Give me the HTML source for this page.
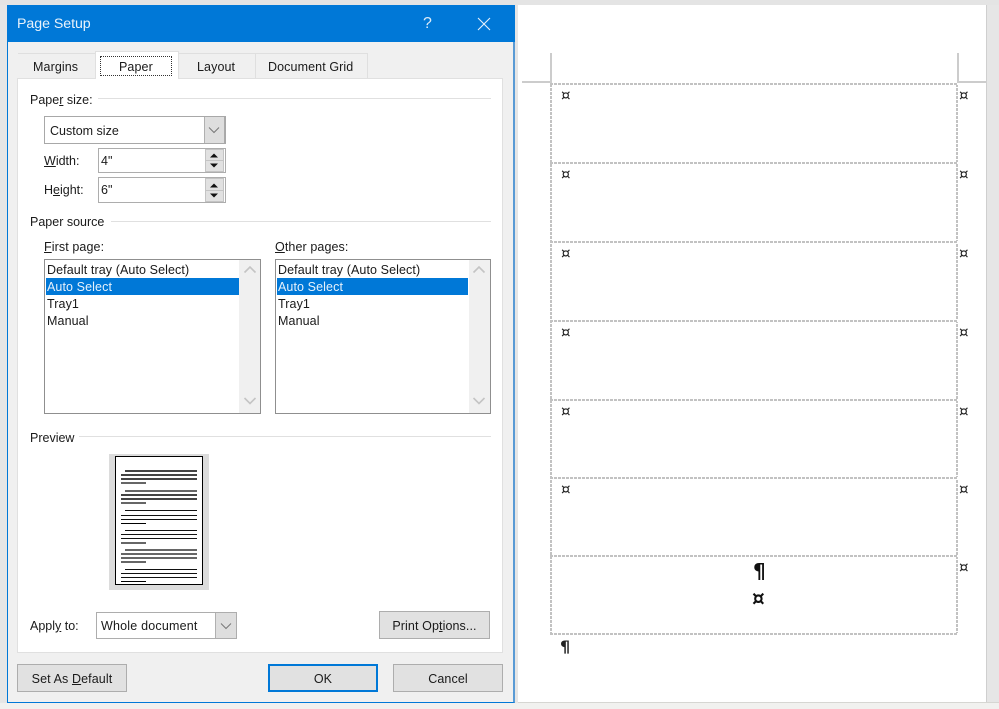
<!DOCTYPE html>
<html><head><meta charset="utf-8"><title>Page Setup</title>
<style>
html,body{margin:0;padding:0;background:#fff}
#r{position:relative;width:999px;height:709px;overflow:hidden;background:#e6e6e6;font-family:"Liberation Sans",sans-serif;font-size:12.5px;letter-spacing:.1px;color:#1a1a1a}
#r div,#r span.t,#r svg{position:absolute}
.t{white-space:nowrap;line-height:16px}
u{text-underline-offset:1px}
.btn{background:#e1e1e1;border:1px solid #adadad;box-sizing:border-box;text-align:center;line-height:28px}
.in{background:#fff;border:1px solid #adadad;box-sizing:border-box}
.hr{height:1px;background:#e0e0e0}
.cell{height:2px;left:550px;width:408px;background:repeating-linear-gradient(90deg,#c2c2c2 0 3px,#fff 3px 4px)}
.v{width:2px;top:84px;height:551px;background:repeating-linear-gradient(180deg,#c2c2c2 0 3px,#fff 3px 4px)}
.cur{font-size:15px;line-height:16px;letter-spacing:0;color:#222;font-family:"DejaVu Sans",sans-serif}
.sp{left:205px;width:19px;background:#e1e1e1;border:1px solid #c4c4c4;box-sizing:border-box}
</style></head><body><div id="r">
<div style="left:0;top:0;width:999px;height:5px;background:#e4e4e4"></div>
<div style="left:518px;top:5px;width:468px;height:698px;background:#fff"></div>
<div style="left:986px;top:5px;width:1px;height:698px;background:#cfcfcf"></div>
<div style="left:0;top:703px;width:999px;height:6px;background:#f1f1ef"></div>
<div style="left:518px;top:702px;width:481px;height:1px;background:#d6d6d2"></div>

<div style="left:522px;top:81px;width:29px;height:2px;background:#cccccc"></div>
<div style="left:550px;top:53px;width:2px;height:30px;background:#cccccc"></div>
<div style="left:957px;top:53px;width:2px;height:30px;background:#cccccc"></div>
<div style="left:958px;top:81px;width:28px;height:2px;background:#cccccc"></div>
<div class="v" style="left:550px"></div>
<div class="v" style="left:956px"></div>
<div class="cell" style="top:83px"></div>
<div class="cell" style="top:162px"></div>
<div class="cell" style="top:241px"></div>
<div class="cell" style="top:320px"></div>
<div class="cell" style="top:399px"></div>
<div class="cell" style="top:477px"></div>
<div class="cell" style="top:555px"></div>
<div class="cell" style="top:633px"></div>
<span class="t cur" style="left:561px;top:87px">¤</span><span class="t cur" style="left:959px;top:87px">¤</span>
<span class="t cur" style="left:561px;top:166px">¤</span><span class="t cur" style="left:959px;top:166px">¤</span>
<span class="t cur" style="left:561px;top:245px">¤</span><span class="t cur" style="left:959px;top:245px">¤</span>
<span class="t cur" style="left:561px;top:324px">¤</span><span class="t cur" style="left:959px;top:324px">¤</span>
<span class="t cur" style="left:561px;top:403px">¤</span><span class="t cur" style="left:959px;top:403px">¤</span>
<span class="t cur" style="left:561px;top:481px">¤</span><span class="t cur" style="left:959px;top:481px">¤</span>
<span class="t cur" style="left:959px;top:559px">¤</span>
<span class="t" style="left:753px;top:560px;font-size:20px;line-height:22px;font-weight:bold;color:#111;font-family:'DejaVu Sans',sans-serif">¶</span>
<span class="t" style="left:752px;top:588px;font-size:20px;line-height:20px;font-weight:bold;color:#111;font-family:'DejaVu Sans',sans-serif">¤</span>
<span class="t" style="left:560px;top:638px;font-size:16px;line-height:18px;font-weight:bold;color:#222;font-family:'DejaVu Sans',sans-serif">¶</span>

<div style="left:7px;top:5px;width:508px;height:698px;background:#f0f0f0;box-sizing:border-box;border:1px solid #0078d7;border-top:0;border-right:2px solid #5a9bd5"></div>
<div style="left:7px;top:5px;width:508px;height:37px;background:#0078d7"></div>
<span class="t" style="left:17px;top:16px;font-size:14.2px;letter-spacing:-.05px;color:#e8f2fb">Page Setup</span>
<span class="t" style="left:423px;top:16px;font-size:16px;color:#dcebf8">?</span>
<svg style="left:477px;top:17px" width="14" height="14" viewBox="0 0 14 14"><path d="M1 1L13 13M13 1L1 13" stroke="#e6f1fb" stroke-width="1.1" fill="none"/></svg>

<div style="left:18px;top:53px;width:350px;height:25px;border-top:1px solid #dfdfdf;border-right:1px solid #dfdfdf;box-sizing:border-box"></div>
<div style="left:95px;top:53px;width:1px;height:25px;background:#dfdfdf"></div>
<div style="left:178px;top:53px;width:1px;height:25px;background:#dfdfdf"></div>
<div style="left:255px;top:53px;width:1px;height:25px;background:#dfdfdf"></div>
<div style="left:17px;top:78px;width:486px;height:575px;background:#fff;border:1px solid #e0e0e0;box-sizing:border-box"></div>
<div style="left:95px;top:51px;width:84px;height:28px;background:#fff;border:1px solid #e0e0e0;border-bottom:0;box-sizing:border-box"></div>
<div style="left:100px;top:56px;width:72px;height:20px;border:1px dotted #333;box-sizing:border-box"></div>
<span class="t" style="left:33px;top:59px">Margins</span>
<span class="t" style="left:119px;top:59px">Paper</span>
<span class="t" style="left:197px;top:59px">Layout</span>
<span class="t" style="left:268px;top:59px">Document Grid</span>

<span class="t" style="left:30px;top:92px;letter-spacing:0">Pape<u>r</u> size:</span>
<div class="hr" style="left:98px;top:98px;width:393px"></div>
<div class="in" style="left:44px;top:116px;width:182px;height:28px;border-color:#a8a8a8"></div>
<span class="t" style="left:50px;top:123px;letter-spacing:0">Custom size</span>
<div style="left:204px;top:117px;width:21px;height:26px;background:#dedede;border-left:1px solid #b0b0b0;box-sizing:border-box;border-right:1px solid #aaa"></div>
<svg style="left:208px;top:126px" width="12" height="8"><path d="M1 1.5L6 6.5L11 1.5" stroke="#777" fill="none"/></svg>

<span class="t" style="left:44px;top:153px;letter-spacing:0"><u>W</u>idth:</span>
<div class="in" style="left:98px;top:148px;width:128px;height:25px"></div>
<span class="t" style="left:101px;top:153px">4"</span>
<div class="sp" style="top:149px;height:12px"></div>
<div class="sp" style="top:160px;height:12px"></div>
<svg style="left:205px;top:150px" width="18" height="22"><path d="M5 7.5H13L9 3.5ZM5 13.5H13L9 17.5Z" fill="#111"/></svg>

<span class="t" style="left:44px;top:182px;letter-spacing:0">H<u>e</u>ight:</span>
<div class="in" style="left:98px;top:177px;width:128px;height:26px"></div>
<span class="t" style="left:101px;top:182px">6"</span>
<div class="sp" style="top:178px;height:13px"></div>
<div class="sp" style="top:190px;height:12px"></div>
<svg style="left:205px;top:180px" width="18" height="22"><path d="M5 7.5H13L9 3.5ZM5 13.5H13L9 17.5Z" fill="#111"/></svg>

<span class="t" style="left:30px;top:214px;letter-spacing:0">Paper source</span>
<div class="hr" style="left:111px;top:221px;width:380px"></div>

<span class="t" style="left:44px;top:239px"><u>F</u>irst page:</span>
<div class="in" style="left:44px;top:259px;width:217px;height:155px;border-color:#8f8f8f"></div>
<div style="left:239px;top:260px;width:21px;height:153px;background:#f0f0f0"></div>
<div style="left:46px;top:278px;width:193px;height:17px;background:#0078d7"></div>
<span class="t" style="left:47px;top:262px">Default tray (Auto Select)</span>
<span class="t" style="left:47px;top:279px;color:#e6f1fb">Auto Select</span>
<span class="t" style="left:47px;top:296px">Tray1</span>
<span class="t" style="left:47px;top:313px">Manual</span>
<svg style="left:243px;top:265px" width="14" height="10"><path d="M1.5 7.5L7 2L12.5 7.5" stroke="#c4c4c4" stroke-width="1.6" fill="none"/></svg>
<svg style="left:243px;top:396px" width="14" height="10"><path d="M1.5 2L7 7.5L12.5 2" stroke="#c4c4c4" stroke-width="1.6" fill="none"/></svg>

<span class="t" style="left:275px;top:239px"><u>O</u>ther pages:</span>
<div class="in" style="left:275px;top:259px;width:216px;height:155px;border-color:#8f8f8f"></div>
<div style="left:469px;top:260px;width:21px;height:153px;background:#f0f0f0"></div>
<div style="left:277px;top:278px;width:191px;height:17px;background:#0078d7"></div>
<span class="t" style="left:278px;top:262px">Default tray (Auto Select)</span>
<span class="t" style="left:278px;top:279px;color:#e6f1fb">Auto Select</span>
<span class="t" style="left:278px;top:296px">Tray1</span>
<span class="t" style="left:278px;top:313px">Manual</span>
<svg style="left:472px;top:265px" width="14" height="10"><path d="M1.5 7.5L7 2L12.5 7.5" stroke="#c4c4c4" stroke-width="1.6" fill="none"/></svg>
<svg style="left:472px;top:396px" width="14" height="10"><path d="M1.5 2L7 7.5L12.5 2" stroke="#c4c4c4" stroke-width="1.6" fill="none"/></svg>

<span class="t" style="left:30px;top:430px;letter-spacing:0">Preview</span>
<div class="hr" style="left:79px;top:436px;width:412px"></div>

<div style="left:109px;top:454px;width:100px;height:136px;background:#dcdcdc"></div>
<div style="left:115px;top:456px;width:88px;height:129px;background:#fff;border:1px solid #000;box-sizing:border-box"></div>
<svg style="left:115px;top:456px" width="88" height="129" shape-rendering="crispEdges">
<g fill="#444">
<rect x="10" y="14" width="72" height="2"/><rect x="6" y="18" width="76" height="2"/><rect x="6" y="22" width="76" height="2"/><rect x="6" y="26" width="25" height="2" fill="#666"/>
<rect x="10" y="34" width="72" height="2" fill="#666"/><rect x="6" y="38" width="76" height="2"/><rect x="6" y="42" width="76" height="2"/><rect x="6" y="46" width="25" height="2" fill="#666"/>
<rect x="10" y="54" width="72" height="1" fill="#111"/><rect x="6" y="59" width="76" height="1" fill="#111"/><rect x="6" y="63" width="76" height="1" fill="#111"/><rect x="6" y="67" width="25" height="1" fill="#000"/>
<rect x="10" y="74" width="72" height="1" fill="#111"/><rect x="6" y="78" width="76" height="1" fill="#111"/><rect x="6" y="82" width="76" height="1" fill="#111"/><rect x="6" y="86" width="25" height="2" fill="#666"/>
<rect x="10" y="93" width="72" height="2" fill="#666"/><rect x="6" y="97" width="76" height="2" fill="#666"/><rect x="6" y="101" width="76" height="2" fill="#666"/><rect x="6" y="105" width="25" height="2" fill="#666"/>
<rect x="10" y="113" width="72" height="1" fill="#111"/><rect x="6" y="117" width="76" height="1" fill="#111"/><rect x="6" y="121" width="76" height="1" fill="#111"/><rect x="6" y="125" width="25" height="1" fill="#000"/>
</g></svg>

<span class="t" style="left:30px;top:618px;letter-spacing:0">Appl<u>y</u> to:</span>
<div class="in" style="left:96px;top:612px;width:141px;height:27px"></div>
<span class="t" style="left:101px;top:618px;letter-spacing:.2px">Whole document</span>
<div style="left:215px;top:613px;width:21px;height:25px;background:#dedede;border-left:1px solid #b0b0b0;box-sizing:border-box"></div>
<svg style="left:220px;top:622px" width="12" height="8"><path d="M1 1.5L6 6.5L11 1.5" stroke="#777" fill="none"/></svg>

<div class="btn" style="left:379px;top:611px;width:111px;height:28px">Print Op<u>t</u>ions...</div>
<div class="btn" style="left:17px;top:664px;width:110px;height:28px">Set As <u>D</u>efault</div>
<div class="btn" style="left:268px;top:664px;width:110px;height:28px;border:2px solid #0078d7;line-height:26px">OK</div>
<div class="btn" style="left:393px;top:664px;width:110px;height:28px">Cancel</div>
</div></body></html>
